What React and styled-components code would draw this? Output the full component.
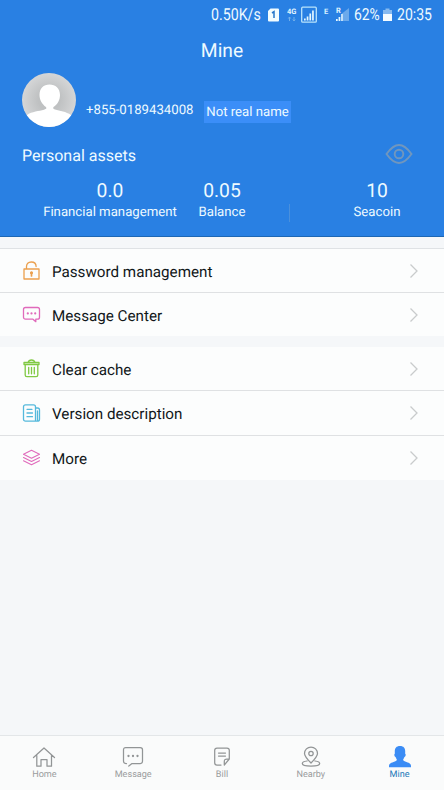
import React from 'react';
import styled, { createGlobalStyle } from 'styled-components';

const GlobalStyle = createGlobalStyle`
  * { box-sizing: border-box; }
  body { margin: 0; background: #f5f7f9; font-family: Roboto, sans-serif; text-rendering: geometricPrecision; }
`;

const Screen = styled.div`
  width: 444px;
  height: 790px;
  display: flex;
  flex-direction: column;
  background: #f5f7f9;
  overflow: hidden;
`;

const Hero = styled.header`
  height: 237px;
  flex: none;
  background: #2980e3;
  border-bottom: 1px solid #1d67b4;
  color: #eefaff;
`;

const StatusBar = styled.div`
  height: 28px;
  display: grid;
  grid-template-columns: 211px 56px 20px 36px 31px 29px 14px 1fr;
  align-items: center;
  svg { display: block; }
`;

const StatusText = styled.span`
  font-size: 16.5px;
  line-height: 28px;
  padding-top: 2px;
  white-space: nowrap;
  transform-origin: left center;
  transform: scaleX(${(p) => p.$stretch});
`;

const Title = styled.h1`
  margin: 0;
  height: 44px;
  font-size: 19.3px;
  line-height: 45px;
  font-weight: 400;
  text-align: center;
`;

const Profile = styled.div`
  height: 57px;
  padding: 1px 0 0 22px;
  display: flex;
`;

const Phone = styled.span`
  width: 118px;
  margin: 29px 0 0 10px;
  font-size: 13.2px;
  line-height: 18px;
`;

const Tag = styled.span`
  width: 87px;
  height: 22px;
  margin-top: 28px;
  background: #3b8ef8;
  font-size: 13.2px;
  line-height: 24px;
  text-align: center;
  white-space: nowrap;
`;

const AssetsHeader = styled.div`
  height: 50px;
  padding: 15px 31px 0 22px;
  display: flex;
  justify-content: space-between;
  font-size: 16.05px;
  line-height: 24px;
`;

const Assets = styled.div`
  height: 48px;
  padding-left: 43px;
  display: grid;
  grid-template-columns: 134px 90px 43px 134px;
`;

const Asset = styled.div`
  text-align: center;
  white-space: nowrap;
`;

const Amount = styled.div`
  font-size: 19.3px;
  line-height: 24px;
`;

const AssetLabel = styled.div`
  font-size: 13.2px;
  line-height: 20px;
`;

const Divider = styled.div`
  width: 1px;
  height: 18px;
  margin: 25px 0 0 22px;
  background: #4a90dc;
`;

const Group = styled.section`
  flex: none;
  margin-top: ${(p) => p.$gap}px;
  border-top: 1px solid ${(p) => (p.$ruled ? '#dfe2e5' : '#fcfdfd')};
  background: #fcfdfd;
`;

const Row = styled.div`
  height: ${(p) => p.$height}px;
  padding: 0 25px 0 22px;
  display: flex;
  align-items: center;
  border-bottom: ${(p) => (p.$last ? 0 : 1)}px solid #dfe1e3;
`;

const RowLabel = styled.span`
  flex: 1;
  margin-left: 11px;
  padding-top: 2px;
  color: #111719;
  font-size: 15.2px;
  line-height: 24px;
`;

const RowIcon = styled.svg`
  width: 19px;
  height: 20px;
  flex: none;
  fill: none;
  stroke: ${(p) => p.$color};
  color: ${(p) => p.$color};
  stroke-width: 1.3;
  stroke-linejoin: round;
  stroke-linecap: round;
`;

const Nav = styled.nav`
  height: 55px;
  flex: none;
  margin-top: auto;
  border-top: 1px solid #e3e6e8;
  background: #fafbfb;
  display: grid;
  grid-template-columns: repeat(5, 1fr);
`;

const NavItem = styled.div`
  padding-top: 9px;
  display: flex;
  flex-direction: column;
  align-items: center;
  color: ${(p) => (p.$active ? '#2178b8' : '#9b9d9e')};
  font-size: 9.1px;
  line-height: 13px;
`;

const NavIcon = styled.svg`
  width: 24px;
  height: 24px;
  fill: none;
  stroke: #929596;
  stroke-width: 1.25;
  stroke-linecap: round;
  stroke-linejoin: round;
`;

const icons = {
  lock: (
    <>
      <path d="M2 8h15v10H2zM4.500 8V5.500C4.500 3 6.200 1 9.300 1s4.800 1.700 4.800 4.500" />
      <circle cx="9.500" cy="11.700" r=".9" fill="currentColor" />
      <path d="M9.500 12v3" strokeWidth="1.700" />
    </>
  ),
  chat: (
    <>
      <path d="M3.500 2.500h12c1.200 0 2 .8 2 2v7.700c0 1.200-.8 2-2 2h-1.700v2.500l-2.800-2.500H3.500c-1.200 0-2-.8-2-2V4.500c0-1.200.8-2 2-2z" />
      <path d="M5.800 8.400h.01M9.500 8.400h.01M13.200 8.400h.01" strokeWidth="2.200" />
    </>
  ),
  trash: (
    <path d="M2 3.500h15v2H2zM6 3.500C6.500 1.900 7.500 1 9.500 1s3 .9 3.500 2.500M3.200 5.500V16c0 1 .7 1.700 1.700 1.700h9.200c1 0 1.700-.7 1.700-1.700V5.500M6.700 8.300v6.500M9.500 8.300v6.500M12.300 8.300v6.500" />
  ),
  document: (
    <path d="M3.500 1.800h8c1.200 0 2 .8 2 2v14.400h-10c-1.200 0-2-.8-2-2V3.800c0-1.200.8-2 2-2zM13.500 5h2c1.200 0 2 .8 2 2v9.200c0 1.200-.8 2-2 2h-2M15.500 8v10M5 6.300h5M5 10h5.500M5 13.700h5.500" />
  ),
  layers: (
    <path d="M9.500 2.200l8 4-8 4-8-4zM1.500 9.500l8 4 8-4M1.500 12.700l8 4 8-4" strokeWidth="1.100" />
  ),
};

function MenuRow({ icon, color, label, height, last }) {
  return (
    <Row $height={height} $last={last}>
      <RowIcon $color={color} viewBox="0 0 19 20">{icons[icon]}</RowIcon>
      <RowLabel>{label}</RowLabel>
      <svg width="10" height="16" viewBox="0 0 10 16" fill="none" stroke="#c9cbcc" strokeWidth="1.300">
        <path d="M1.500 1.500L8 8l-6.500 6.500" />
      </svg>
    </Row>
  );
}

const navIcons = {
  home: <path d="M1.500 12.500L12 3l10.500 9.500M4.800 10.500v10.700H9v-6.700h6v6.700h4.500V10.500" />,
  message: (
    <>
      <path d="M5.500 18.500H5c-1.500 0-2.500-.8-2.500-2.200V4.700c0-1.400.8-2.200 2.200-2.200h14.600c1.400 0 2.200.8 2.200 2.200v11.600c0 1.400-.8 2.200-2.200 2.200H11L7.800 21" />
      <path d="M7.500 11h.01M12 11h.01M16.500 11h.01" strokeWidth="2.300" />
    </>
  ),
  bill: (
    <path d="M11 20H7c-1.500 0-2.300-.8-2.300-2.300V5.300C4.700 3.800 5.500 3 7 3h10c1.500 0 2.300.8 2.300 2.300V14l-5 6v-3.500c0-1.700.8-2.500 2.500-2.500h2.500M8.500 8h7M8.500 11h7" />
  ),
  nearby: (
    <>
      <path d="M12 18c-3.500-3.500-6.500-6.500-6.500-9.500a6.500 6.500 0 0 1 13 0c0 3-3 6-6.500 9.500zM8 16c-3 .4-4.700 1.200-4.700 2.400 0 1.700 3.400 2.600 8.700 2.600s8.700-.9 8.700-2.600c0-1.200-1.700-2-4.700-2.400" />
      <circle cx="12" cy="8.500" r="2.200" />
    </>
  ),
  mine: (
    <path
      fill="#3b8cf5"
      stroke="none"
      d="M1 22.300v-1.500c0-1.800 2-3.200 4.500-3.900 2-.6 3.200-1.100 3.300-1.900.1-.8-.7-1.500-1.200-3-.7-.1-1.300-1.200-1.300-2.300 0-.7.300-1 .6-1.200C6.300 3.800 7.800 1 12 1s5.700 2.800 5.100 7.500c.3.200.6.500.6 1.200 0 1.100-.6 2.200-1.300 2.300-.5 1.500-1.300 2.200-1.200 3 .1.800 1.300 1.300 3.300 1.900 2.500.7 4.500 2.100 4.500 3.900v1.500z"
    />
  ),
};

function Avatar() {
  return (
    <svg width="54" height="54" viewBox="0 0 54 54">
      <defs>
        <clipPath id="avatar"><circle cx="27" cy="27" r="27" /></clipPath>
        <radialGradient id="shade">
          <stop offset="0.4" stopColor="#bfc1c2" />
          <stop offset="1" stopColor="#d5d6d7" />
        </radialGradient>
      </defs>
      <g clipPath="url(#avatar)">
        <rect width="54" height="54" fill="url(#shade)" />
        <path d="M5 42c5-3.500 12-3.800 17-5.200 3-1 2.500-1.500 2-2.700C20 31 17.500 27 17.500 22c0-6.500 4-10.500 10-10.500s10.500 4 10.500 10.500c0 5-2.500 9.500-6.500 12-.5 1.200-.5 1.700 1.500 2.500 5 1.500 11 2 16 5.500V54H5z" fill="#fff" />
      </g>
    </svg>
  );
}

export default function App() {
  return (
    <Screen>
      <GlobalStyle />
      <Hero>
        <StatusBar>
          <span />
          <StatusText $stretch={0.86}>0.50K/s</StatusText>
          <svg width="13" height="14" viewBox="0 0 13 14">
            <path d="M3.500.5H11q1 0 1 1v11q0 1-1 1H2q-1 0-1-1V3z" fill="#f2fcff" />
            <path d="M5 5l2-1.300V10" fill="none" stroke="#2475ca" strokeWidth="1.500" />
          </svg>
          <svg width="31" height="18" viewBox="0 0 31 18">
            <text x="0" y="8" fontSize="7.500" fontWeight="700" fill="#e2f5ff">4G</text>
            <path d="M2.500 15v-4m-1.200 1.500L2.500 11l1.200 1.500M7 11v4m-1.200-1.500L7 15l1.200-1.500" stroke="#72afe9" fill="none" />
            <rect x="14.700" y="1.200" width="14.600" height="15" rx="1" fill="none" stroke="#b9e3fc" strokeWidth="1.300" />
            <path d="M17 14.500v-2h1.700v2zM19.700 14.500v-4h1.700v4zM22.400 14.500v-7h1.700v7zM25.100 14.500v-10h1.700v10z" fill="#e5f7ff" />
          </svg>
          <svg width="29" height="18" viewBox="0 0 29 18">
            <text x="1" y="8" fontSize="7.500" fontWeight="700" fill="#d5edff">E</text>
            <text x="13" y="7" fontSize="7.500" fontWeight="700" fill="#e2f5ff">R</text>
            <path d="M19 15V7.500L26 2v13z" fill="#6ba9eb" />
            <path d="M13 15v-2h1.700v2zM15.600 15v-4h1.700v4zM18.200 15V8h1.500v7z" fill="#e5f7ff" />
          </svg>
          <StatusText $stretch={0.84}>62%</StatusText>
          <svg width="9" height="14" viewBox="0 0 9 14">
            <path d="M2.500.500h4v1.500H9v5H0V2h2.500z" fill="#86baf0" />
            <path d="M0 6h9v7H0z" fill="#f5fcff" />
          </svg>
          <StatusText $stretch={0.85}>20:35</StatusText>
        </StatusBar>
        <Title>Mine</Title>
        <Profile>
          <Avatar />
          <Phone>+855-0189434008</Phone>
          <Tag>Not real name</Tag>
        </Profile>
        <AssetsHeader>
          <span>Personal assets</span>
          <svg width="28" height="20" viewBox="0 0 28 20" fill="none" stroke="#7196bd" strokeWidth="1.900">
            <path d="M1.500 10Q8 1 14 1t12.500 9Q20 19 14 19T1.500 10z" />
            <circle cx="14" cy="10" r="4.300" />
          </svg>
        </AssetsHeader>
        <Assets>
          <Asset>
            <Amount>0.0</Amount>
            <AssetLabel>Financial management</AssetLabel>
          </Asset>
          <Asset>
            <Amount>0.05</Amount>
            <AssetLabel>Balance</AssetLabel>
          </Asset>
          <Divider />
          <Asset>
            <Amount>10</Amount>
            <AssetLabel>Seacoin</AssetLabel>
          </Asset>
        </Assets>
      </Hero>
      <Group $gap={11} $ruled>
        <MenuRow icon="lock" color="#eba04f" label="Password management" height={44} />
        <MenuRow icon="chat" color="#e06abb" label="Message Center" height={43} last />
      </Group>
      <Group $gap={11}>
        <MenuRow icon="trash" color="#80c943" label="Clear cache" height={43} />
        <MenuRow icon="document" color="#55b9dc" label="Version description" height={45} />
        <MenuRow icon="layers" color="#e06abb" label="More" height={44} last />
      </Group>
      <Nav>
        {[
          ['home', 'Home'],
          ['message', 'Message'],
          ['bill', 'Bill'],
          ['nearby', 'Nearby'],
          ['mine', 'Mine'],
        ].map(([icon, label]) => (
          <NavItem key={icon} $active={icon === 'mine'}>
            <NavIcon viewBox="0 0 24 24">{navIcons[icon]}</NavIcon>
            {label}
          </NavItem>
        ))}
      </Nav>
    </Screen>
  );
}
